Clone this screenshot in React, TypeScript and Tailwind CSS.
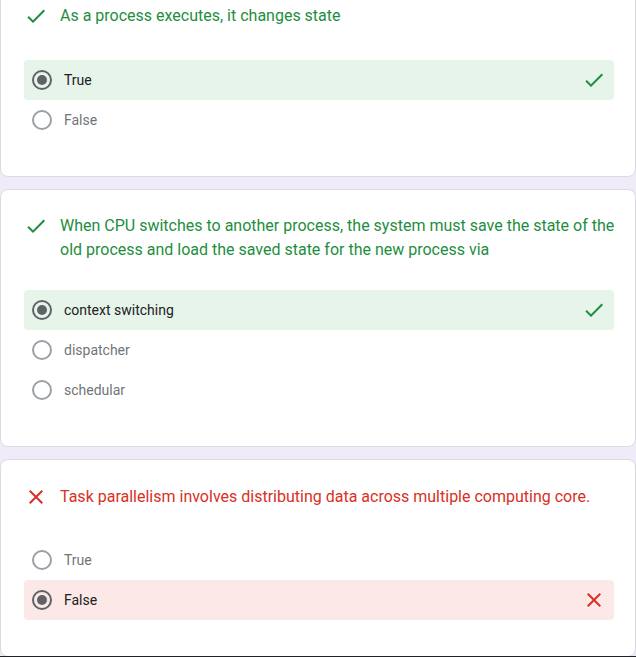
import React from "react";

type Option = { label: string; selected?: boolean };

type Question = {
  title: string;
  correct: boolean;
  options: Option[];
  top: string;
  gap: string;
};

const questions: Question[] = [
  {
    title: "As a process executes, it changes state",
    correct: true,
    top: "pt-6",
    gap: "mt-8",
    options: [{ label: "True", selected: true }, { label: "False" }],
  },
  {
    title:
      "When CPU switches to another process, the system must save the state of the old process and load the saved state for the new process via",
    correct: true,
    top: "pt-6",
    gap: "mt-[28px]",
    options: [
      { label: "context switching", selected: true },
      { label: "dispatcher" },
      { label: "schedular" },
    ],
  },
  {
    title: "Task parallelism involves distributing data across multiple computing core.",
    correct: false,
    top: "pt-[25px]",
    gap: "mt-[31px]",
    options: [{ label: "True" }, { label: "False", selected: true }],
  },
];

const CheckIcon = ({ className }: { className?: string }) => (
  <svg viewBox="0 0 24 24" className={className} fill="currentColor">
    <path d="M9 16.17L4.83 12l-1.42 1.41L9 19 21 7l-1.41-1.41z" />
  </svg>
);

const CloseIcon = ({ className }: { className?: string }) => (
  <svg viewBox="0 0 24 24" className={className} fill="currentColor">
    <path d="M19 6.41L17.59 5 12 10.59 6.41 5 5 6.41 10.59 12 5 17.59 6.41 19 12 13.41 17.59 19 19 17.59 13.41 12z" />
  </svg>
);

const Radio = ({ checked }: { checked?: boolean }) => (
  <span
    className={
      checked
        ? "flex h-5 w-5 shrink-0 items-center justify-center rounded-full border-2 border-[#5f6368]"
        : "flex h-5 w-5 shrink-0 items-center justify-center rounded-full border-2 border-[#9aa0a6]"
    }
  >
    {checked && <span className="h-2.5 w-2.5 rounded-full bg-[#5f6368]" />}
  </span>
);

const QuestionCard = ({ q }: { q: Question }) => {
  const tone = q.correct ? "text-[#1e8e3e]" : "text-[#d93025]";
  return (
    <div className={"rounded-lg border border-[#dadce0] bg-white pb-9 pl-[23px] pr-[21px] " + q.top}>
      <div className="-mr-[6px] flex items-start gap-3">
        {q.correct ? (
          <CheckIcon className={"h-6 w-6 shrink-0 " + tone} />
        ) : (
          <CloseIcon className={"h-6 w-6 shrink-0 " + tone} />
        )}
        <div className={"text-base leading-6 " + tone}>{q.title}</div>
      </div>
      <div className={"flex flex-col " + q.gap}>
        {q.options.map((o) => {
          const bg = o.selected ? (q.correct ? "bg-[#e6f4ea]" : "bg-[#fce8e6]") : "";
          return (
            <div key={o.label} className={"flex h-10 items-center rounded pl-2 pr-2 " + bg}>
              <Radio checked={o.selected} />
              <span
                className={
                  "ml-3 flex-1 text-sm " + (o.selected ? "text-[#202124]" : "text-[#70757a]")
                }
              >
                {o.label}
              </span>
              {o.selected &&
                (q.correct ? (
                  <CheckIcon className="h-6 w-6 text-[#1e8e3e]" />
                ) : (
                  <CloseIcon className="h-6 w-6 text-[#d93025]" />
                ))}
            </div>
          );
        })}
      </div>
    </div>
  );
};

export default function App() {
  return (
    <div
      className="h-[657px] overflow-hidden bg-[#f0ebf8]"
      style={{ fontFamily: "Roboto, 'Liberation Sans', sans-serif" }}
    >
      <div className="-mt-[21px] flex flex-col gap-3">
        {questions.map((q) => (
          <QuestionCard key={q.title} q={q} />
        ))}
        <div className="-mt-[13px] h-[2px] bg-[#202124]" />
      </div>
    </div>
  );
}
